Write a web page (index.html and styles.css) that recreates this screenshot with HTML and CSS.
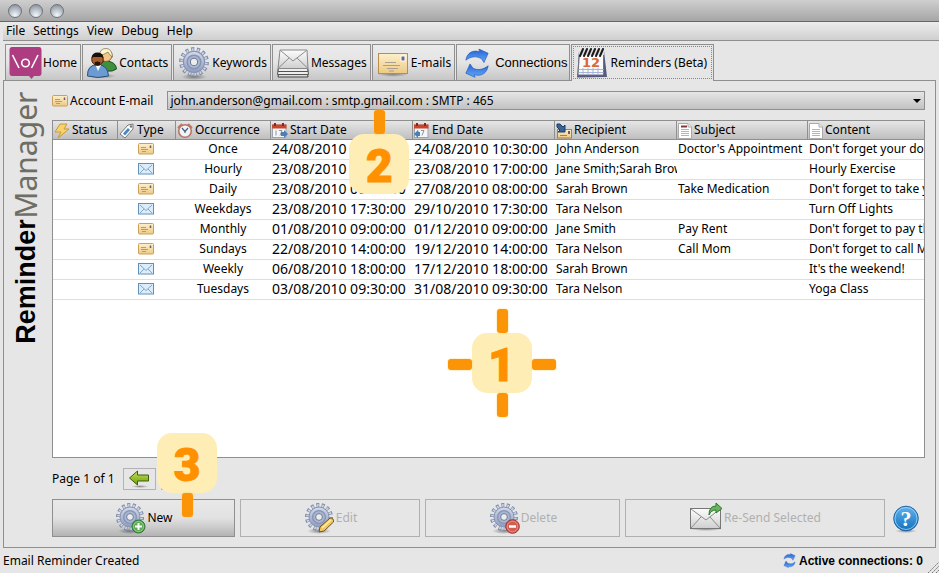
FILE: index.html
```html
<!DOCTYPE html>
<html lang="en">
<head>
<meta charset="utf-8">
<title>Reminder Manager</title>
<link rel="stylesheet" href="styles.css">
</head>
<body>
<svg class="defs" aria-hidden="true">
  <defs>
    <linearGradient id="gGear" x1="0" y1="0" x2="0" y2="1"><stop offset="0" stop-color="#d3daea"/><stop offset="1" stop-color="#8d9cc0"/></linearGradient>
    <linearGradient id="gBlue" x1="0" y1="0" x2="0" y2="1"><stop offset="0" stop-color="#2563cf"/><stop offset="1" stop-color="#65aaff"/></linearGradient>
    <linearGradient id="gPaper" x1="0" y1="0" x2="0" y2="1"><stop offset="0" stop-color="#fdfdfd"/><stop offset="1" stop-color="#cfcfcf"/></linearGradient>
    <linearGradient id="gTan" x1="0" y1="0" x2="0" y2="1"><stop offset="0" stop-color="#fdf0cb"/><stop offset="1" stop-color="#eec983"/></linearGradient>
    <linearGradient id="gGreen" x1="0" y1="0" x2="0" y2="1"><stop offset="0" stop-color="#c2e05e"/><stop offset="1" stop-color="#6fa000"/></linearGradient>
    <linearGradient id="gHelp" x1="0" y1="0" x2="0" y2="1"><stop offset="0" stop-color="#5fb4ee"/><stop offset="1" stop-color="#1470bd"/></linearGradient>
    <radialGradient id="gShade"><stop offset="0" stop-color="#000" stop-opacity=".4"/><stop offset="1" stop-color="#000" stop-opacity="0"/></radialGradient>
  </defs>
  <symbol id="gear" viewBox="0 0 32 32">
    <ellipse cx="16" cy="29" rx="12" ry="3" fill="url(#gShade)"/>
    <circle cx="16" cy="15" r="11.5" fill="none" stroke="#7f8cab" stroke-width="5" pathLength="28" stroke-dasharray="1.1 .9"/>
    <circle cx="16" cy="15" r="11.2" fill="none" stroke="#cdd5e6" stroke-width="3.4" pathLength="28" stroke-dasharray=".6 1.4" stroke-dashoffset="-.25"/>
    <circle cx="16" cy="15" r="10" fill="url(#gGear)" stroke="#8793ae" stroke-width="1"/>
    <circle cx="16" cy="15" r="6.4" fill="#a9b6d2" stroke="#8795b5" stroke-width="1.4"/>
    <circle cx="16" cy="15" r="3.4" fill="#ececec" stroke="#6d7a99" stroke-width="1"/>
  </symbol>
  <symbol id="sync" viewBox="0 0 28 32">
    <path d="M2 13C3 5 10 1.500 17 4L16 1L26 5.500L21.500 15.500L19 11.500C13 8 7 9 2 13Z" fill="url(#gBlue)" stroke="#1d57b8" stroke-width=".7"/>
    <path d="M26 19C25 27 18 31 11 28.500L12 31.500L2 27L6.500 17L9.500 21.500C15 24.500 21 23 26 19Z" fill="url(#gBlue)" stroke="#1d57b8" stroke-width=".7"/>
  </symbol>
  <symbol id="card" viewBox="0 0 16 12">
    <rect x=".5" y=".5" width="15" height="10.500" rx="1" fill="url(#gTan)" stroke="#cb9f5c"/>
    <path d="M3 4.500h5M3 6.500h7M4 8.500h4" stroke="#b69a76"/><path d="M12.500 2.500v2.500" stroke="#665a78" stroke-width="1.500"/>
  </symbol>
  <symbol id="mail" viewBox="0 0 16 12">
    <rect x=".5" y=".5" width="15" height="10.500" fill="#dcecfa" stroke="#6290b4"/>
    <path d="M2 2L8 7.500L14 2M2 10l4-4M14 10l-4-4" fill="none" stroke="#7fa6cb"/>
  </symbol>
  <symbol id="doc" viewBox="0 0 14 16">
    <path d="M.5.5H10L13.500 4V15.500H.5Z" fill="#fff" stroke="#aaa"/><path d="M10 .5V4h3.500" fill="#eee" stroke="#aaa"/>
    <path d="M3 6.500h8M3 8.500h8M3 10.500h8M3 12.500h8" stroke="#b5b5b5"/>
  </symbol>
  <symbol id="cal" viewBox="0 0 16 16">
    <rect x=".5" y="2" width="13.500" height="12.500" fill="#f4f6f8" stroke="#9aa5b0"/><path d="M0 1.500h14.500V5.500H0z" fill="#c9452c"/>
    <path d="M3 0v3M11 0v3" stroke="#8d2416" stroke-width="2"/><path d="M4 7.500v5M7 7.500h3L8 12.500" fill="none" stroke="#8c949c"/>
  </symbol>
</svg>

<div class="window">
  <header class="titlebar"><i class="light"></i><i class="light"></i><i class="light"></i></header>
  <nav class="menubar" aria-label="Menu">
    <button>File</button><button>Settings</button><button>View</button><button>Debug</button><button>Help</button>
  </nav>

  <div class="tabs" role="tablist">
    <button class="tab" role="tab"><svg width="33" height="33" viewBox="0 0 33 33"><path d="M3 1H30Q32.500 1 32.500 4V27Q32.500 30 30 30H25L22.500 33L20 30H3Q.5 30 .5 27V4Q.5 1 3 1Z" fill="#ad3d80"/><path d="M3.500 9L10 22M29 9L22.500 22" stroke="#fff" stroke-width="1.600"/><circle cx="16.500" cy="17" r="3.800" fill="none" stroke="#fff" stroke-width="1.600"/></svg>Home</button>
    <button class="tab" role="tab"><svg width="32" height="32" viewBox="0 0 32 32"><ellipse cx="16" cy="29" rx="14" ry="2.500" fill="url(#gShade)"/><path d="M13 23Q12 14 21 14Q30 15 30.500 22Q27 25 20 24Z" fill="#3f8f3c" stroke="#1e4f20"/><circle cx="20" cy="8.500" r="6" fill="#f3c78c" stroke="#7d6734"/><path d="M13.500 8Q14 1.500 20 1.500T26.500 10Q24 9 22 5Q18 8 13.500 8Z" fill="#fff5cf" stroke="#756d45" stroke-width=".7"/><path d="M1.500 29Q1 18 11.500 17.500Q22 18 22.500 29Q12 32 1.500 29Z" fill="#6b9bd2" stroke="#294f7c"/><path d="M9.500 18L12 24L15 18Z" fill="#fff"/><circle cx="11.500" cy="12.500" r="5.800" fill="#a95f2c" stroke="#45200b"/><path d="M5.500 11Q6 5.500 11.500 5.500T17.500 11L15.500 10H7.500Z" fill="#17100c"/><path d="M8.500 15.500Q11.500 13.500 14.500 15.500L13.500 18.500H9.500Z" fill="#21150e"/></svg>Contacts</button>
    <button class="tab" role="tab"><svg width="34" height="34"><use href="#gear"/></svg>Keywords</button>
    <button class="tab" role="tab"><svg width="34" height="32" viewBox="0 0 34 32"><path d="M4 15L2 30H32L30 15Z" fill="#ddd" stroke="#444"/><path d="M3.500 14L1.500 27.500H32.500L30.500 14Z" fill="#eee" stroke="#555"/><path d="M4 8L2 24.500H32L30 8Z" fill="#eee" stroke="#555"/><path d="M4 3H31L32 21.500H2Z" fill="url(#gPaper)" stroke="#888"/><path d="M4.500 3.500L17 14L30.500 3.500M2.500 21L13 11M31.500 21L21 11" fill="none" stroke="#8b8b8b"/></svg>Messages</button>
    <button class="tab" role="tab"><svg width="34" height="32" viewBox="0 0 34 32"><ellipse cx="17" cy="27" rx="16" ry="3" fill="url(#gShade)"/><rect x="2.500" y="6.500" width="29" height="20" fill="url(#gTan)" stroke="#b98e4d"/><path d="M9 15.500h11M7 18.500h17M11 21.500h11M13 24h5" stroke="#aaa092"/><rect x="25" y="9" width="4" height="5" fill="#6d6590" stroke="#fff"/></svg>E-mails</button>
    <button class="tab tab-arial" role="tab"><svg width="26" height="32" viewBox="0 0 28 32"><use href="#sync"/></svg>Connections</button>
    <button class="tab selected" role="tab" aria-selected="true"><svg width="34" height="32" viewBox="0 0 34 32"><path d="M4 4H29L32 30L2 30.500Z" fill="#555b7c"/><path d="M4.500 5H28.500V28H3Z" fill="#fafafa" stroke="#6f6f7d"/><path d="M3.500 22.500h25M3.500 25.500h25M8 21v7M13 21v7M18 21v7M23 21v7" stroke="#a5b4dc"/><path d="M4 4h25v4H4z" fill="#ddd"/><path d="M5 9l3-7M9 9l3-7M13 9l3-7M17 9l3-7M21 9l3-7M25 9l3-7" stroke="#1a1a1a" stroke-width="2" stroke-linecap="round"/><text x="16" y="20" class="cal-num">12</text></svg>Reminders (Beta)</button>
  </div>

  <main class="panel">
    <h1 class="side-title"><b>Reminder</b><span>Manager</span></h1>
    <div class="content">
      <div class="account">
        <label for="account"><svg width="16" height="12"><use href="#card"/></svg>Account E-mail</label>
        <div class="combo">
          <select id="account"><option>john.anderson@gmail.com : smtp.gmail.com : SMTP : 465</option></select>
          <span class="callout c2">2<i class="stem up"></i></span>
        </div>
      </div>

      <div class="grid-area">
        <div class="grid-scroll">
        <table>
          <colgroup><col class="w-status"><col class="w-type"><col class="w-occ"><col class="w-date"><col class="w-date"><col class="w-rec"><col class="w-sub"><col></colgroup>
          <thead><tr>
            <th><svg width="16" height="16" viewBox="0 0 16 16"><path d="M6 1H13L10 6H15L4 15L7 9H1Z" fill="#f8d36a" stroke="#c99a3a"/></svg>Status</th>
            <th><svg width="16" height="16" viewBox="0 0 16 16"><path d="M1 11L9 2L14 1L14 6L6 15Z" fill="#fff" stroke="#777"/><path d="M4 10.500L9 5L11 7L6 12.500Z" fill="#4588c4"/><circle cx="12" cy="3.500" r="1.200" fill="#777"/></svg>Type</th>
            <th><svg width="16" height="16" viewBox="0 0 16 16"><path d="M1 5L5 1M15 5L11 1" stroke="#b97b65" stroke-width="2"/><circle cx="8" cy="8" r="6.300" fill="#eef5fa" stroke="#bd7360" stroke-width="1.600"/><path d="M5 5L8 8.500L11 5M8 8.500V10" fill="none" stroke="#48607a" stroke-width="1.200"/></svg>Occurrence</th>
            <th><svg width="16" height="16" viewBox="0 0 16 16"><use href="#cal"/><path d="M9 9h3V7l4 4-4 4v-2H9z" fill="#4a7fb8"/></svg>Start Date</th>
            <th><svg width="16" height="16" viewBox="0 0 16 16"><use href="#cal"/><path d="M6 9H4V7L0 11l4 4v-2h2z" fill="#4a7fb8"/></svg>End Date</th>
            <th><svg width="16" height="16" viewBox="0 0 16 16"><rect x="1.500" y="6.500" width="14" height="8.500" fill="url(#gTan)" stroke="#ab8047"/><path d="M4 12.500h7" stroke="#98826a"/><rect x="12" y="8" width="2" height="3" fill="#685a7c"/><path d="M1 1H4L7 4L9 2V9H2L4 7L1 4Z" fill="#3a6293" stroke="#1c3b65"/></svg>Recipient</th>
            <th><svg width="14" height="16" viewBox="0 0 14 16"><use href="#doc"/><path d="M3 3.500h6" stroke="#843838" stroke-width="2"/></svg>Subject</th>
            <th><svg width="14" height="16"><use href="#doc"/></svg>Content</th>
          </tr></thead>
          <tbody>
            <tr><td></td><td><svg width="16" height="12"><use href="#card"/></svg></td><td>Once</td><td>24/08/2010 10:30:00</td><td>24/08/2010 10:30:00</td><td>John Anderson</td><td>Doctor's Appointment</td><td>Don't forget your doctor's appointment</td></tr>
            <tr><td></td><td><svg width="16" height="12"><use href="#mail"/></svg></td><td>Hourly</td><td>23/08/2010 08:00:00</td><td>23/08/2010 17:00:00</td><td>Jane Smith;Sarah Brown</td><td></td><td>Hourly Exercise</td></tr>
            <tr><td></td><td><svg width="16" height="12"><use href="#card"/></svg></td><td>Daily</td><td>23/08/2010 08:00:00</td><td>27/08/2010 08:00:00</td><td>Sarah Brown</td><td>Take Medication</td><td>Don't forget to take your medication</td></tr>
            <tr><td></td><td><svg width="16" height="12"><use href="#mail"/></svg></td><td>Weekdays</td><td>23/08/2010 17:30:00</td><td>29/10/2010 17:30:00</td><td>Tara Nelson</td><td></td><td>Turn Off Lights</td></tr>
            <tr><td></td><td><svg width="16" height="12"><use href="#card"/></svg></td><td>Monthly</td><td>01/08/2010 09:00:00</td><td>01/12/2010 09:00:00</td><td>Jane Smith</td><td>Pay Rent</td><td>Don't forget to pay the rent</td></tr>
            <tr><td></td><td><svg width="16" height="12"><use href="#card"/></svg></td><td>Sundays</td><td>22/08/2010 14:00:00</td><td>19/12/2010 14:00:00</td><td>Tara Nelson</td><td>Call Mom</td><td>Don't forget to call Mom</td></tr>
            <tr><td></td><td><svg width="16" height="12"><use href="#mail"/></svg></td><td>Weekly</td><td>06/08/2010 18:00:00</td><td>17/12/2010 18:00:00</td><td>Sarah Brown</td><td></td><td>It's the weekend!</td></tr>
            <tr><td></td><td><svg width="16" height="12"><use href="#mail"/></svg></td><td>Tuesdays</td><td>03/08/2010 09:30:00</td><td>31/08/2010 09:30:00</td><td>Tara Nelson</td><td></td><td>Yoga Class</td></tr>
          </tbody>
        </table>
        </div>
        <span class="callout c1">1<i class="stem up"></i><i class="stem down"></i><i class="stem left"></i><i class="stem right"></i></span>
      </div>

      <div class="pager">
        <span>Page 1 of 1</span>
        <button aria-label="Previous page"><svg width="22" height="18" viewBox="0 0 22 18"><ellipse cx="12" cy="16.500" rx="9" ry="1.500" fill="url(#gShade)"/><path d="M1.500 8L9.500 1V5H20.500V11H9.500V15Z" fill="url(#gGreen)" stroke="#3f5d0c" stroke-linejoin="round"/></svg></button>
        <button aria-label="Next page"><svg width="22" height="18" viewBox="0 0 22 18"><path d="M20.500 8L12.500 1V5H1.500V11H12.500V15Z" fill="url(#gGreen)" stroke="#3f5d0c" stroke-linejoin="round"/></svg></button>
      </div>

      <div class="actions">
        <button class="action"><svg width="32" height="32" viewBox="0 0 32 32"><use href="#gear"/><circle cx="24.500" cy="24.500" r="6.500" fill="#5aa754" stroke="#2f7835"/><circle cx="24.500" cy="24.500" r="5" fill="none" stroke="#a6d69c" stroke-width=".8"/><path d="M21 24.500h7M24.500 21v7" stroke="#fff" stroke-width="2"/></svg>New</button>
        <button class="action" disabled><svg width="32" height="32" viewBox="0 0 32 32"><use href="#gear"/><path d="M16 30L17 25L27 16Q31 16 30.500 20L21 29Z" fill="#f3c65e" stroke="#705329"/><path d="M19 26L28 18" stroke="#fff0a8" stroke-width="1.500"/></svg>Edit</button>
        <button class="action" disabled><svg width="32" height="32" viewBox="0 0 32 32"><use href="#gear"/><circle cx="24.500" cy="24.500" r="6.800" fill="#d15c50" stroke="#9e332c"/><circle cx="24.500" cy="24.500" r="5.300" fill="none" stroke="#ed9d91" stroke-width=".8"/><path d="M21 24.500h7" stroke="#fff" stroke-width="2.500"/></svg>Delete</button>
        <button class="action" disabled><svg width="34" height="32" viewBox="0 0 34 32"><ellipse cx="17" cy="27" rx="17" ry="2" fill="url(#gShade)"/><rect x="1.500" y="6.500" width="30" height="20" fill="url(#gPaper)" stroke="#777"/><path d="M2 7L17 18L31 7M2 26L12 15M31 26L21 15" fill="none" stroke="#8c8c8c"/><path d="M20 13Q20 4 27 4V1L33 6.500L27 11V8Q22 8 20 13Z" fill="#67b45a" stroke="#2c7530"/></svg>Re-Send Selected</button>
        <button class="help" aria-label="Help"><svg width="28" height="28" viewBox="0 0 28 28"><ellipse cx="14" cy="26" rx="11" ry="2" fill="url(#gShade)"/><circle cx="14" cy="13.500" r="12.300" fill="url(#gHelp)" stroke="#1f64a5"/><circle cx="14" cy="13.500" r="11" fill="none" stroke="#a6d5f6" stroke-width=".8"/><text x="14" y="21" class="help-mark">?</text></svg></button>
        <span class="callout c3">3<i class="stem down"></i></span>
      </div>
    </div>
  </main>

  <footer class="status">
    <span>Email Reminder Created</span>
    <strong><svg width="13" height="15" viewBox="0 0 28 32"><use href="#sync"/></svg>Active connections: 0</strong>
    <svg class="grip" width="12" height="18" viewBox="0 0 12 18"><path d="M1 18L12 7M5 18L12 11M9 18L12 15" stroke="#777" stroke-dasharray="2 1"/></svg>
  </footer>
</div>
</body>
</html>
```
FILE: styles.css
```css
* { box-sizing: border-box; }
body {
  margin: 0;
  background: #e6e6e6;
  color: #000;
  font: 12px/18px "Noto Sans", sans-serif;
}
button, select { font: inherit; color: inherit; }
svg { flex: none; }
.defs { position: absolute; width: 0; height: 0; }
.window { display: flex; flex-direction: column; min-height: 100vh; }

.titlebar {
  display: flex;
  gap: 7px;
  padding: 4px 8px 3px;
  background: linear-gradient(#cfcfcf, #a6a6a6);
  border-bottom: 1px solid #666;
}
.light {
  width: 14px;
  height: 14px;
  border: 1px solid #6e737b;
  border-radius: 50%;
  background: radial-gradient(circle at 50% 85%, #f4f8fc, #b3bac4 55%, #7f868f);
}
.menubar {
  display: flex;
  gap: 8px;
  margin-left: 3px;
  padding: 0 3px;
  background: linear-gradient(#ececec, #cfcfcf);
  border-bottom: 1px solid #8f8f8f;
}
.menubar button { padding: 0; border: 0; background: none; }

.tabs {
  display: flex;
  align-items: flex-end;
  gap: 1px;
  margin: 3px 3px 0;
  padding-left: 2px;
}
.tab {
  display: flex;
  align-items: center;
  gap: 1px;
  height: 36px;
  padding: 0 3px;
  border: 1px solid #8f8f8f;
  border-bottom: 0;
  background: linear-gradient(#ebebeb, #e4e4e4 50%, #c6c6c6);
}
.tab-arial {
  gap: 5px;
  padding: 0 2px 0 7px;
  font-family: "Liberation Sans", sans-serif;
  font-size: 13px;
}
.tab.selected {
  position: relative;
  height: 37px;
  margin-bottom: -1px;
  padding-right: 6px;
  background: #e6e6e6;
  outline: 1px dotted #888;
  outline-offset: -3px;
  z-index: 1;
}
.cal-num { font: bold 13px "DejaVu Sans", sans-serif; text-anchor: middle; fill: #d9683a; }

.panel {
  flex: 1;
  display: flex;
  margin: 0 3px;
  padding-right: 10px;
  border: 1px solid #8f8f8f;
}
.side-title {
  flex: none;
  display: flex;
  width: 48px;
  margin: 11px 0 0;
  padding-right: 4px;
  justify-content: flex-end;
  writing-mode: vertical-rl;
  transform: rotate(180deg);
  align-self: flex-start;
  font-size: 30px;
  line-height: 36px;
  font-weight: 400;
  color: #6f6e64;
}
.side-title b { font: bold 27px/36px "Liberation Sans", sans-serif; color: #000; }
.content { flex: 1; min-width: 0; display: flex; flex-direction: column; padding: 10px 0; }

.account { display: flex; align-items: center; gap: 14px; }
.account label { display: flex; align-items: center; gap: 2px; }
.combo { flex: 1; position: relative; display: flex; }
.combo::after {
  content: "";
  position: absolute;
  right: 4px;
  top: 8px;
  border: 4px solid transparent;
  border-top-color: #000;
}
select {
  flex: 1;
  height: 19px;
  padding: 0 2px;
  border: 1px solid #8f8f8f;
  border-radius: 0;
  appearance: none;
  background: linear-gradient(#e6e6e6, #c2c2c2);
}

.grid-area { flex: 1; position: relative; display: flex; margin-top: 10px; }
.grid-scroll { flex: 1; min-width: 0; overflow: hidden; border: 1px solid #8f8f8f; background: #fff; }
table { width: 100%; table-layout: fixed; border-collapse: separate; border-spacing: 0; }
.w-status { width: 65px; }
.w-type { width: 58px; }
.w-occ { width: 95px; }
.w-date { width: 142px; }
.w-rec { width: 122px; }
.w-sub { width: 131px; }
th {
  height: 19px;
  padding: 0 1px;
  border-right: 1px solid #8f8f8f;
  border-bottom: 1px solid #8f8f8f;
  background: linear-gradient(#e6e6e6, #bfbfbf);
  font-weight: 400;
  text-align: left;
  white-space: nowrap;
}
th:last-child { border-right: 0; }
th svg { margin-right: 2px; vertical-align: middle; }
td {
  height: 20px;
  padding: 0 0 1px 1px;
  border-bottom: 1px solid #dedede;
  white-space: nowrap;
  overflow: hidden;
}
td:nth-child(2), td:nth-child(3) { text-align: center; }
td:nth-child(2) { padding-right: 4px; }
td:nth-child(3) { padding-right: 2px; }
td:nth-child(4), td:nth-child(5) { font-size: 14px; }
td svg { display: block; margin: auto; }

.pager { display: flex; align-items: center; gap: 5px; margin-top: 10px; }
.pager span { padding-right: 3px; }
.pager button {
  display: flex;
  align-items: center;
  justify-content: center;
  width: 33px;
  height: 22px;
  padding: 0;
  border: 1px solid #b3b3b3;
  background: none;
}

.actions {
  position: relative;
  display: grid;
  grid-template-columns: 183fr 180fr 195fr 260fr 35px;
  gap: 5px;
  margin-top: 9px;
}
.action {
  display: flex;
  align-items: center;
  justify-content: center;
  gap: 1px;
  height: 38px;
  padding: 0;
  border: 1px solid #8f8f8f;
  background: linear-gradient(#e8e8e8, #e2e2e2 50%, #b4b4b4);
}
.action:disabled { border-color: #b0b0b0; background: none; color: #b0b0b0; }
.help { display: flex; align-items: center; justify-content: flex-start; padding: 2px 0 0 2px; border: 0; background: none; }
.help-mark { font: bold 22px "Liberation Serif", serif; text-anchor: middle; fill: #fff; }

.status { display: flex; align-items: center; height: 25px; padding-left: 3px; }
.status strong {
  display: flex;
  align-items: center;
  gap: 3px;
  margin-left: auto;
  font: bold 12px "Liberation Sans", sans-serif;
}
.grip { align-self: flex-end; margin-left: 4px; }

.callout {
  position: absolute;
  z-index: 2;
  width: 60px;
  height: 60px;
  border-radius: 15px;
  background: #feedb5;
  color: #ff9100;
  font: 900 46px/64px Roboto, sans-serif;
  text-align: center;
  -webkit-text-stroke: 1px #ff9100;
}
.stem { position: absolute; background: #fc9408; border-radius: 3px; box-shadow: 0 0 2px #fbd060; }
.up, .down { left: 25px; width: 11px; height: 24px; }
.left, .right { top: 26px; width: 24px; height: 11px; }
.up { bottom: 100%; }
.down { top: 100%; }
.left { right: 100%; }
.right { left: 100%; }
.c1 { left: calc(50% - 17px); top: 213px; }
.c2 { left: 182px; top: 43px; }
.c3 { left: 105px; bottom: 44px; }
```
